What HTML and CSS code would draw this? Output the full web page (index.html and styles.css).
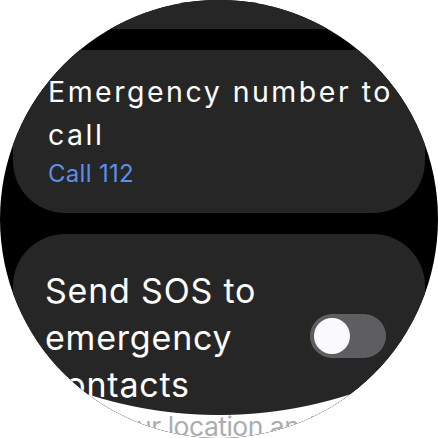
FILE: index.html
```html
<!DOCTYPE html>
<html lang="en">
<head>
<meta charset="utf-8">
<title>Emergency SOS</title>
<link rel="stylesheet" href="styles.css">
</head>
<body>
  <div class="screen">
    <div class="list">
      <div class="card card-partial"></div>

      <div class="card chip">
        <div class="chip-label">Emergency number to call</div>
        <div class="chip-secondary">Call 112</div>
      </div>

      <div class="card toggle-chip">
        <div class="toggle-text">
          <div class="toggle-title">Send SOS to emergency contacts</div>
          <div class="toggle-desc">With your location and a recording</div>
        </div>
        <div class="switch" role="switch" aria-checked="false">
          <span class="switch-thumb"></span>
        </div>
      </div>
    </div>
    <div class="edge-fade"></div>
  </div>
</body>
</html>
```

FILE: styles.css
```css
html, body {
  margin: 0;
  padding: 0;
  background: #ffffff;
}

body {
  font-family: Inter, "Noto Sans", sans-serif;
  color: #ffffff;
}

/* round watch display */
.screen {
  position: relative;
  z-index: 0;
  width: 438px;
  height: 438px;
  border-radius: 50%;
  overflow: hidden;
  background: #000000;
}

.list {
  display: flex;
  flex-direction: column;
  gap: 21px;
  padding: 0 13px;
  margin-top: -51px;
}

.card {
  background: #262626;
  border-radius: 52px;
}

.card-partial {
  height: 80px;
}

/* chip with primary + secondary label */
.chip {
  height: 163px;
  box-sizing: border-box;
  padding: 20px 14px 0 35px;
}

.chip-label {
  position: relative;
  z-index: 2;
  font-size: 28.5px;
  line-height: 43px;
  letter-spacing: 2.5px;
}

.chip-secondary {
  position: relative;
  z-index: 2;
  font-size: 24px;
  line-height: 36px;
  letter-spacing: 0.3px;
  color: #5c8fe8;
}

/* toggle chip */
.toggle-chip {
  display: flex;
  align-items: flex-start;
  gap: 14px;
  padding: 33px 39px 40px 32px;
}

.toggle-text {
  flex: 1;
  min-width: 0;
}

.toggle-title {
  position: relative;
  z-index: 2;
  font-size: 34px;
  line-height: 47px;
  letter-spacing: 0.8px;
}

.toggle-desc {
  position: relative;
  z-index: 2;
  font-size: 26.5px;
  line-height: 37px;
  letter-spacing: -0.5px;
  color: #a9adb3;
  white-space: nowrap;
}

.switch {
  flex: none;
  margin-top: 47px;
  width: 76px;
  height: 44px;
  box-sizing: border-box;
  padding: 4px;
  border-radius: 22px;
  background: #5e5d62;
  display: flex;
  align-items: center;
}

.switch-thumb {
  width: 36px;
  height: 36px;
  border-radius: 50%;
  background: #fbfbff;
}

/* bottom curvature of the display */
.edge-fade {
  position: absolute;
  inset: 0;
  z-index: 1;
  pointer-events: none;
  background: radial-gradient(circle 426px at 219px -11px, rgba(255, 255, 255, 0) 425.5px, #ffffff 426.5px);
}
```
